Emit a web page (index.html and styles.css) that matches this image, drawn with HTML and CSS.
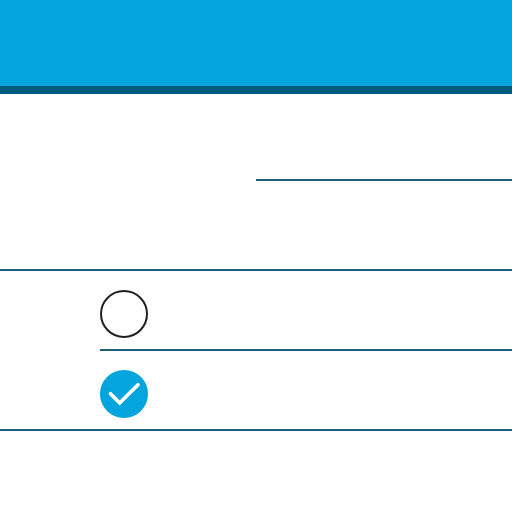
FILE: index.html
```html
<!DOCTYPE html>
<html lang="en">
<head>
<meta charset="utf-8">
<title>Checklist</title>
<link rel="stylesheet" href="styles.css">
</head>
<body>
<header class="bar"></header>
<main>
  <div class="field"></div>
  <div class="heading"></div>
  <ul class="list">
    <li class="item">
      <label class="option">
        <input class="tick" type="checkbox" aria-label="First item">
      </label>
    </li>
    <li class="item">
      <label class="option">
        <input class="tick" type="checkbox" aria-label="Second item" checked>
        <svg class="mark" viewBox="0 0 48 48" aria-hidden="true"><path d="M10.5 23.7 19.7 33 38 14.7" stroke-width="3.7"/></svg>
      </label>
    </li>
  </ul>
</main>
</body>
</html>
```
FILE: styles.css
```css
* {
  box-sizing: border-box;
}

body {
  margin: 0;
  background: #fff;
  font-family: "Liberation Sans", sans-serif;
}

.bar {
  height: 94px;
  background: #04a4dc;
  border-bottom: 8px solid #035c7e;
}

.field {
  height: 87px;
  margin-left: 50%;
  border-bottom: 2px solid #1f5f78;
}

.heading {
  height: 90px;
  border-bottom: 2px solid #1f5f78;
}

.list {
  display: flex;
  flex-direction: column;
  margin: 0;
  padding: 0;
  list-style: none;
  border-bottom: 2px solid #1f5f78;
}

.item {
  margin-left: 100px;
  padding: 19px 0 11px;
  border-bottom: 2px solid #1f5f78;
}

.item:last-child {
  border-bottom: 0;
}

.option {
  display: block;
  position: relative;
  width: 48px;
  height: 48px;
}

.tick {
  appearance: none;
  display: block;
  width: 48px;
  height: 48px;
  margin: 0;
  border: 2px solid #231f20;
  border-radius: 50%;
}

.tick:checked {
  border-color: #04a4dc;
  background: #04a4dc;
}

.mark {
  position: absolute;
  inset: 0;
  fill: none;
  stroke: #fff;
  stroke-linecap: round;
  stroke-linejoin: miter;
  pointer-events: none;
}
```
